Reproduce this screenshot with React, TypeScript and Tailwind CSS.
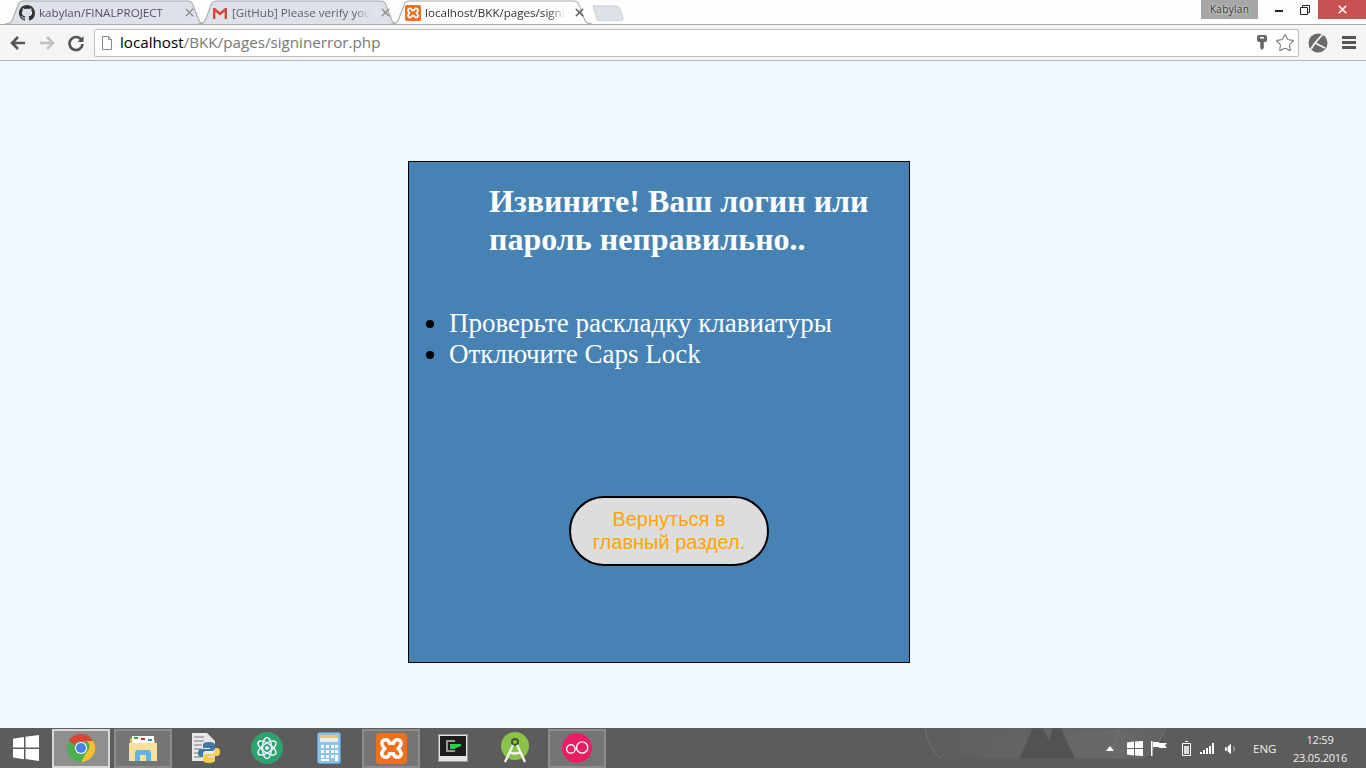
import { Star, X } from 'lucide-react'
import { ReactNode } from 'react'

function TabShape({ fill, stroke }: { fill: string; stroke: string }) {
  return (
    <svg className="absolute inset-0 w-full h-full" viewBox="0 0 200 24" preserveAspectRatio="none">
      <path d="M0 24 C6 24 7 21 8 18 L13 5 C14 2 15 1 19 1 L181 1 C185 1 186 2 187 5 L192 18 C193 21 194 24 200 24" fill={fill} stroke={stroke} strokeWidth="1" />
    </svg>
  )
}

function Tab({ icon, title, active, textColor }: { icon: ReactNode; title: string; active?: boolean; textColor: string }) {
  return (
    <div className={`relative w-[201px] h-6 flex items-center pl-[14px] pr-[10px] pt-[1px] gap-[4px] -mr-[8px] ${active ? 'z-10' : ''}`}>
      <TabShape fill={active ? '#fdfdfd' : '#dde2ea'} stroke="#a8a8a8" />
      <span className="relative shrink-0 w-4 h-4">{icon}</span>
      <span className={`relative flex-1 whitespace-nowrap text-[11.6px] leading-4 [mask-image:linear-gradient(to_right,black_88%,transparent)] ${textColor}`}>{title}</span>
      <X className={`relative shrink-0 ml-1 ${active ? 'text-[#555]' : 'text-[#8d8d8d]'}`} size={13} strokeWidth={2.6} />
    </div>
  )
}

function GithubIcon() {
  return (
    <svg viewBox="0 0 16 16" className="w-4 h-4" fill="#333">
      <path d="M8 0C3.58 0 0 3.58 0 8c0 3.54 2.29 6.53 5.47 7.59.4.07.55-.17.55-.38 0-.19-.01-.82-.01-1.49-2.01.37-2.53-.49-2.69-.94-.09-.23-.48-.94-.82-1.13-.28-.15-.68-.52-.01-.53.63-.01 1.08.58 1.23.82.72 1.21 1.87.87 2.33.66.07-.52.28-.87.51-1.07-1.78-.2-3.64-.89-3.64-3.95 0-.87.31-1.59.82-2.15-.08-.2-.36-1.02.08-2.12 0 0 .67-.21 2.2.82.64-.18 1.32-.27 2-.27s1.36.09 2 .27c1.53-1.04 2.2-.82 2.2-.82.44 1.1.16 1.92.08 2.12.51.56.82 1.27.82 2.15 0 3.07-1.87 3.75-3.65 3.95.29.25.54.73.54 1.48 0 1.07-.01 1.93-.01 2.2 0 .21.15.46.55.38A8.01 8.01 0 0 0 16 8c0-4.42-3.58-8-8-8z" />
    </svg>
  )
}

function GmailIcon() {
  return (
    <svg viewBox="0 0 16 16" className="w-4 h-4">
      <path d="M1 3h2l5 4.200L13 3h2v11h-2.400V6.800L8 10.400 3.400 6.800V14H1z" fill="#d3493c" />
    </svg>
  )
}

function XamppIcon({ size = 16 }: { size?: number }) {
  return (
    <svg viewBox="0 0 32 32" width={size} height={size}>
      <rect width="32" height="32" rx="4" fill="#ee6f1c" />
      <path d="M10 7c2.500 0 3.500 2 4 3.500h4C18.500 9 19.500 7 22 7c4 0 5 4 3 6.500L23 16l2 2.500C27 21 26 25 22 25c-2.500 0-3.500-2-4-3.500h-4C13.500 23 12.500 25 10 25c-4 0-5-4-3-6.500L9 16l-2-2.500C5 11 6 7 10 7z" fill="none" stroke="#fff" strokeWidth="3.600" />
    </svg>
  )
}

function TaskItem({ children, state }: { children: ReactNode; state?: 'open' | 'focus' }) {
  const cls =
    state === 'focus'
      ? 'bg-[#8f8f8f] border-[#d8d8d8]'
      : state === 'open'
        ? 'bg-[#757575] border-[#8c8c8c]'
        : 'border-transparent'
  return <div className={`w-[58px] h-[39px] mr-1 shrink-0 border-2 flex items-center justify-center ${cls}`}>{children}</div>
}

export default function App() {
  return (
    <div className="w-[1366px] h-[768px] flex flex-col overflow-hidden bg-[#f0f8ff] font-['Open_Sans','Noto_Sans',sans-serif]">
      {/* tab strip */}
      <div className="h-[25px] shrink-0 bg-[#fdfdfd] border-b border-[#a8a8a8] flex">
        <div className="flex pl-[5px]">
          <Tab textColor="text-[#5b4a66]" title="kabylan/FINALPROJECT" icon={<GithubIcon />} />
          <Tab textColor="text-[#5f5f5f]" title="[GitHub] Please verify you" icon={<GmailIcon />} />
          <Tab active textColor="text-[#333]" title="localhost/BKK/pages/signi" icon={<XamppIcon />} />
          <div className="relative w-[32px] h-[16px] mt-[5px] ml-[8px]">
            <svg viewBox="0 0 32 16" className="absolute inset-0 w-full h-full">
              <path d="M1 1 L24 1 C26 1 27 2 28 4 L31 13 C31 15 30 16 29 16 L8 16 C6 16 5 15 5 13z" fill="#dde2ea" stroke="#c4c8ce" />
            </svg>
          </div>
        </div>
        <div className="flex-1" />
        <div className="h-[19px] w-[57px] mr-[7px] bg-[#a6a6a6] flex items-center justify-center text-[10px] text-[#333] tracking-[0.3px] [text-shadow:0_0_3px_#fff]">Kabylan</div>
        <div className="flex h-[19px] items-center">
          <div className="w-[27px] flex justify-center pt-[3px]">
            <div className="w-2 h-[2px] bg-[#222]" />
          </div>
          <div className="w-[26px] flex justify-center">
            <svg viewBox="0 0 10 10" className="w-[10px] h-[10px]" fill="none" stroke="#222">
              <path d="M.5 2.500h7v7h-7zM2.500 2.500v-2h7v7h-2" strokeWidth="1" />
            </svg>
          </div>
          <div className="w-[48px] h-[19px] bg-[#c75050] flex items-center justify-center">
            <X className="text-white" size={13} strokeWidth={3} />
          </div>
        </div>
      </div>

      {/* toolbar */}
      <div className="h-[36px] shrink-0 bg-[#f5f5f5] border-b border-[#b6b6b6] flex items-center pl-[9px] pr-[10px]">
        <svg viewBox="0 0 18 18" className="w-[18px] h-[18px] mr-[11px]" fill="none" stroke="#555" strokeWidth="2.600">
          <path d="M16 9H3M9 3 3 9l6 6" />
        </svg>
        <svg viewBox="0 0 18 18" className="w-[18px] h-[18px] mr-[11px]" fill="none" stroke="#c2c2c2" strokeWidth="2.600">
          <path d="M2 9h13M9 3l6 6-6 6" />
        </svg>
        <svg viewBox="0 0 18 18" className="w-[18px] h-[18px] mr-[9px]" fill="none">
          <path d="M14.500 6A6.500 6.500 0 1 0 15.500 10" stroke="#555" strokeWidth="2.600" />
          <path d="M16.500 2v6h-6z" fill="#555" />
        </svg>
        <div className="h-[28px] w-[1205px] shrink-0 bg-white border border-[#bdbdbd] rounded-[2px] flex items-center pl-[6px] pr-[3px] gap-[7px]">
          <svg viewBox="0 0 12 14" className="w-3 h-[14px] shrink-0" fill="#fff" stroke="#888">
            <path d="M1.500.5h6l3 3v10h-9zM7.500.5v3h3" />
          </svg>
          <span className="flex-1 text-[15.2px] leading-5 pb-[2px] text-[#777] whitespace-nowrap">
            <span className="text-black">localhost</span>/BKK/pages/signinerror.php
          </span>
          <svg viewBox="0 0 10 16" className="w-[10px] h-[16px] mr-[1px]" fill="#666">
            <path d="M0 2q0-2 2-2h6q2 0 2 2v3q0 2-2 2H6.800v6L5 15 3.200 13V7H2Q0 7 0 5zM3 2v1.500h4V2z" fillRule="evenodd" />
          </svg>
          <Star className="text-[#777]" size={20} strokeWidth={1.3} />
        </div>
        <svg viewBox="0 0 20 20" className="w-5 h-5 ml-[9px] mr-[14px]">
          <circle cx="10" cy="10" r="9.500" fill="#6b6b6b" />
          <path d="M15 1 7 10l10 5M3 16 7 10" fill="none" stroke="#f5f5f5" strokeWidth="1.800" />
        </svg>
        <svg viewBox="0 0 14 13" className="w-[14px] h-[13px]" fill="#555">
          <path d="M0 0h14v3H0zM0 5h14v3H0zM0 10h14v3H0z" />
        </svg>
      </div>

      {/* page */}
      <main className="flex-1 min-h-0 pt-[100px] pl-[408px] font-['Liberation_Serif',serif]">
        <div className="w-[502px] h-[502px] shrink-0 border border-black bg-[#4682b4] flex flex-col">
          <h2 className="mt-[20px] ml-[80px] w-[400px] text-[32px] leading-[38px] font-bold text-white">
            Извините! Ваш логин или пароль неправильно..
          </h2>
          <ul className="mt-[50px] pl-[40px] list-disc text-[27px] leading-[31px] text-white marker:text-black">
            <li>Проверьте раскладку клавиатуры</li>
            <li>Отключите Caps Lock</li>
          </ul>
          <div className="mt-[126px] ml-[160px] w-[200px] h-[70px] rounded-[35px] border-2 border-black bg-[#dddddd] text-center flex items-center justify-center font-['Liberation_Sans',sans-serif] text-[20px] leading-[23px] text-[#ffa500]">
            <span className="w-[170px]">Вернуться в главный раздел.</span>
          </div>
        </div>
      </main>

      {/* taskbar */}
      <footer className="relative h-[40px] shrink-0 bg-[#5c5c5c] flex items-center overflow-hidden">
        <svg viewBox="0 0 260 30" className="absolute left-[915px] top-0 w-[260px] h-[31px]" fill="none">
          <defs>
            <linearGradient id="glow" x1="0" y1="0" x2="1" y2="0">
              <stop offset="0" stopColor="#fff" stopOpacity="0.01" />
              <stop offset="0.8" stopColor="#fff" stopOpacity="0.08" />
              <stop offset="1" stopColor="#fff" stopOpacity="0.03" />
            </linearGradient>
          </defs>
          <path d="M10 0C12 12 18 24 26 30H226C238 24 246 12 250 0z" fill="url(#glow)" />
          <path d="M10 0C12 12 18 24 26 30M250 0C246 12 238 24 226 30" stroke="#747474" strokeWidth="1" />
          <path d="M118 0 L104 30 H160 L146 0 L138 0 L134 12 L128 0z" fill="#4a4a4a" fillOpacity="0.7" />
          <path d="M205 0 L197 20" stroke="#747474" strokeWidth="1" />
        </svg>
        <div className="relative w-[52px] flex justify-center shrink-0">
          <svg viewBox="0 0 26 26" className="w-[26px] h-[26px]" fill="#fff">
            <path d="M0 3.700 11 2v10.500H0zM12.500 1.800 26 0v12.500H12.500zM0 14h11v10.300L0 22.500zM12.500 14H26v12l-13.500-1.900z" />
          </svg>
        </div>
        <div className="relative flex items-center">
          <TaskItem state="focus">
            <svg viewBox="0 0 32 32" className="w-[30px] h-[30px]">
              <circle cx="16" cy="16" r="15" fill="#4caf50" />
              <path d="M16 1a15 15 0 0 1 13 7.500H16a7.500 7.500 0 0 0-7 4.500L3 8A15 15 0 0 1 16 1z" fill="#db4437" />
              <path d="M29 8.500A15 15 0 0 1 16 31l6.500-11a7.500 7.500 0 0 0 0-11.500z" fill="#fbc02d" />
              <circle cx="16" cy="16" r="6.500" fill="#fff" />
              <circle cx="16" cy="16" r="5.300" fill="#4a7fe8" />
            </svg>
          </TaskItem>
          <TaskItem state="open">
            <svg viewBox="0 0 32 32" className="w-8 h-8">
              <path d="M3 6h10l2 2h13v20H3z" fill="#d9b95c" />
              <path d="M5 4h22v8H5z" fill="#fff" />
              <path d="M7 5h4v2H7z" fill="#3a3" />
              <path d="M14 6h4v2h-4z" fill="#c33" />
              <path d="M21 7h4v2h-4z" fill="#38c" />
              <path d="M2 11h28v18H2z" fill="#f6e09a" />
              <path d="M8 29V21q0-3 3-3h10q3 0 3 3v8h-5v-6h-6v6z" fill="#5eb3e0" />
            </svg>
          </TaskItem>
          <TaskItem>
            <svg viewBox="0 0 32 32" className="w-8 h-8">
              <path d="M3 1h15l8 8v20H3z" fill="#e8e8e8" />
              <path d="M5 5h10M5 9h10M5 13h8M5 17h7M5 21h7M5 25h7" stroke="#777" strokeWidth="1.200" />
              <path d="M20 10q-6 0-6 3v3h7v1h-9q-3 0-3 4t3 4h2v-3q0-3 3-3h6q3 0 3-3v-3q0-3-6-3z" fill="#3c78aa" />
              <path d="M20 31q6 0 6-3v-3h-7v-1h9q3 0 3-4t-3-4h-2v3q0 3-3 3h-6q-3 0-3 3v3q0 3 6 3z" fill="#f5cf47" />
            </svg>
          </TaskItem>
          <TaskItem>
            <svg viewBox="0 0 32 32" className="w-8 h-8" fill="none">
              <circle cx="16" cy="16" r="16" fill="#2fa36f" />
              <ellipse cx="16" cy="16" rx="10.500" ry="4.500" stroke="#eef" strokeWidth="1.500" transform="rotate(35 16 16)" />
              <ellipse cx="16" cy="16" rx="10.500" ry="4.500" stroke="#eef" strokeWidth="1.500" transform="rotate(-35 16 16)" />
              <ellipse cx="16" cy="16" rx="10.500" ry="4.500" stroke="#eef" strokeWidth="1.500" transform="rotate(90 16 16)" />
              <circle cx="16" cy="16" r="2" fill="#eef" />
            </svg>
          </TaskItem>
          <TaskItem>
            <svg viewBox="0 0 24 32" className="w-6 h-8">
              <rect x=".5" y=".5" width="23" height="31" rx="2" fill="#8cc3e8" stroke="#5b9ccb" />
              <rect x="3" y="3" width="18" height="7" fill="#e4eef5" />
              <path d="M3 3h18v3H3z" fill="#f0c674" />
              <path d="M4 13h3v3H4zM9 13h3v3H9zM14 13h3v3h-3zM18 13h3v3h-3zM4 18h3v3H4zM9 18h3v3H9zM14 18h3v3h-3zM18 18h3v3h-3zM4 23h3v3H4zM9 23h3v3H9zM14 23h3v3h-3zM18 23h3v6h-3zM4 27h8v2H4z" fill="#fff" />
            </svg>
          </TaskItem>
          <TaskItem state="open">
            <XamppIcon size={31} />
          </TaskItem>
          <TaskItem>
            <svg viewBox="0 0 30 28" className="w-[30px] h-[28px]">
              <rect x=".5" y=".5" width="29" height="27" fill="#e2e2e2" stroke="#999" />
              <rect x="2" y="2" width="26" height="20" fill="#1d1d1d" />
              <path d="M17 7H9v10h8" fill="none" stroke="#999" strokeWidth="2" />
              <path d="M12 10h11v2l-7 3h-4z" fill="#2ad14e" />
            </svg>
          </TaskItem>
          <TaskItem>
            <svg viewBox="0 0 30 32" className="w-[30px] h-8">
              <circle cx="15" cy="14" r="14" fill="#8bc34a" />
              <circle cx="15" cy="10" r="3" fill="none" stroke="#3d5a2a" strokeWidth="2" />
              <path d="M13 13 5 30M17 13l8 17M9 20q6 3 12 0" fill="none" stroke="#f3f3f3" strokeWidth="2.400" />
            </svg>
          </TaskItem>
          <TaskItem state="open">
            <svg viewBox="0 0 32 32" className="w-[30px] h-[30px]" fill="none">
              <circle cx="16" cy="16" r="16" fill="#e91e63" />
              <circle cx="9.500" cy="17" r="4.500" stroke="#fff" strokeWidth="1.500" />
              <circle cx="21.500" cy="15.500" r="6" stroke="#fff" strokeWidth="1.500" />
            </svg>
          </TaskItem>
        </div>
        <div className="flex-1" />
        {/* tray */}
        <div className="relative flex items-center text-[#f0f0f0] pr-[19px] pt-[1px]">
          <svg viewBox="0 0 8 5" className="w-2 h-[5px] mr-[13px]" fill="#fff"><path d="M4 0l4 5H0z" /></svg>
          <svg viewBox="0 0 16 15" className="w-4 h-[15px] mr-[8px]" fill="#fff">
            <path d="M0 1.500 7 .5v6.500H0zM8 .4 16 0v7H8zM0 8h7v6.500l-7-1zM8 8h8v7l-8-.5z" />
          </svg>
          <svg viewBox="0 0 16 15" className="w-4 h-[15px] mr-[15px]" fill="#fff">
            <path d="M0 0h1.500v15H0z" />
            <path d="M2 1h6v1h8l-2 2.500 2 2.500H8V6H2z" />
          </svg>
          <svg viewBox="0 0 9 15" className="w-[9px] h-[15px] mr-[9px]" fill="none" stroke="#fff">
            <path d="M.5 2.500h8v12h-8zM3 .5h3" />
            <path d="M2 5h5v8H2z" fill="#ddd" stroke="none" />
          </svg>
          <svg viewBox="0 0 15 11" className="w-[15px] h-[11px] mr-[10px]" fill="#fff">
            <path d="M0 9h2v2H0zM3 7h2v4H3zM6 5h2v6H6zM9 3h2v8H9zM12 0h2v11h-2z" />
          </svg>
          <svg viewBox="0 0 14 12" className="w-[12px] h-3 mr-[16px]" fill="#fff">
            <path d="M0 4h2v4H0zM3 3.500 7 0v12L3 8.500z" />
            <path d="M10 3q2 3 0 6" fill="none" stroke="#ccc" />
          </svg>
          <span className="text-[11.5px] mr-[17px] w-[23px]">ENG</span>
          <div className="flex flex-col items-center text-[11px] tracking-[-0.2px] leading-[18px] w-[54px]">
            <span>12:59</span>
            <span className="whitespace-nowrap">23.05.2016</span>
          </div>
        </div>
      </footer>
    </div>
  )
}
